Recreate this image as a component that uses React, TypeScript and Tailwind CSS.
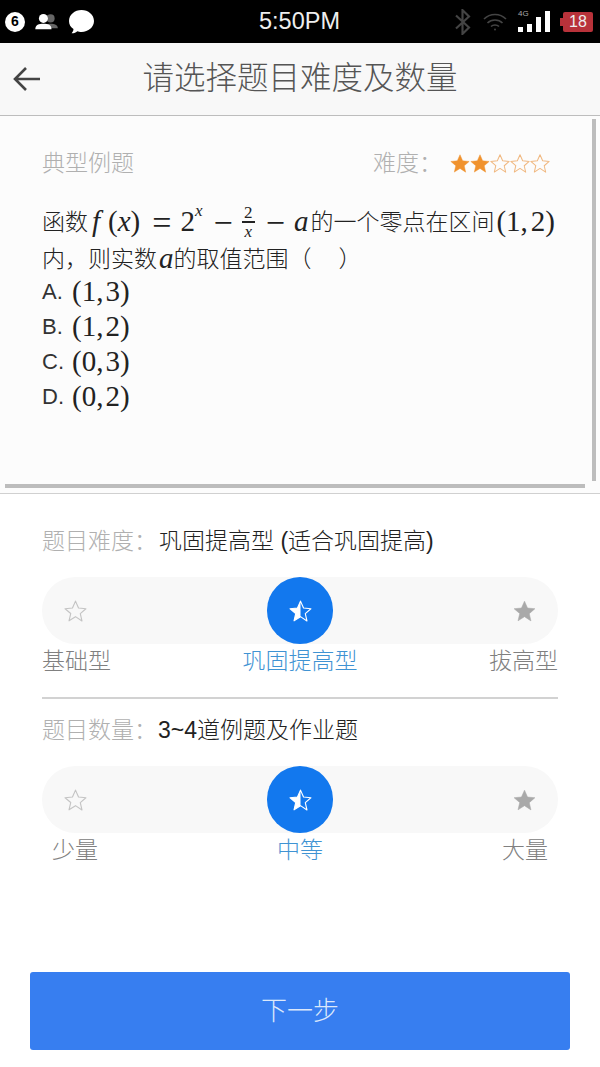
import React from "react";

const FONT = "font-['Liberation_Sans','Noto_Sans_CJK_SC',sans-serif]";
const MATH = "font-['Liberation_Serif',serif]";
const STAR = "M12 2l2.9 6.6 7.1.7-5.4 4.7 1.6 7L12 16.9 5.8 20.9l1.6-7L2 9.3l7.1-.7z";

const Star = ({ kind, className }: { kind: "full" | "empty" | "half"; className: string }) => (
  <svg viewBox="0 -1 24 24" className={className}>
    {kind === "half" && <path d="M12 2v14.9L5.8 20.9l1.6-7L2 9.3l7.1-.7z" fill="currentColor" />}
    <path
      d={STAR}
      fill={kind === "full" ? "currentColor" : "none"}
      stroke="currentColor"
      strokeWidth={kind === "full" ? 0.5 : 1.1}
      strokeLinejoin="round"
    />
  </svg>
);

const Slider = ({ labels, active, inset }: { labels: string[]; active: string; inset?: boolean }) => (
  <div>
    <div className="flex h-[67px] items-center justify-between rounded-full bg-[#f8f8f8] px-[21px]">
      <Star kind="empty" className="h-[25px] w-[25px] text-[#c4c4c4]" />
      <div className="flex h-[67px] w-[66px] items-center justify-center rounded-full bg-[#1278ee]">
        <Star kind="half" className="h-[25px] w-[25px] text-white" />
      </div>
      <Star kind="full" className="h-[25px] w-[25px] text-[#a9a9a9]" />
    </div>
    <div
      className={`flex h-[34px] items-center justify-between text-[23px] leading-[34px] font-light text-[#808080] ${
        inset ? "px-[10px]" : ""
      }`}
    >
      {labels.map((t) => (
        <span key={t} className={t === active ? "text-[#3f93d3]" : ""}>
          {t}
        </span>
      ))}
    </div>
  </div>
);

const Option = ({ letter, a, b }: { letter: string; a: string; b: string }) => (
  <div className="flex h-[35px] items-center">
    <span className="w-[30px] text-[22px] font-light text-[#333]">{letter}.</span>
    <span className={`${MATH} text-[29px] text-[#222]`}>
      ({a},<span className="ml-[2px]">{b}</span>)
    </span>
  </div>
);

export default function App() {
  return (
    <div className={`${FONT} relative flex h-[1067px] w-[600px] flex-col overflow-hidden bg-white`}>
      {/* status bar */}
      <div className="flex h-[43px] items-center justify-between bg-black pr-[7px] pl-[5px]">
        <div className="flex items-center gap-[10px]">
          <div className="flex h-[20px] w-[20px] items-center justify-center rounded-full bg-white text-[14px] font-bold text-black">
            6
          </div>
          <svg viewBox="0 0 26 20" className="h-[18px] w-[24px]">
            <circle cx="17" cy="6" r="4.500" fill="#666" />
            <path d="M10 17c0-4 3-5 7-5s8 1 8 5z" fill="#666" />
            <circle cx="9" cy="6" r="5" fill="#fff" />
            <path d="M0 18c0-5 4-6 9-6s9 1 9 6z" fill="#fff" />
          </svg>
          <svg viewBox="0 0 24 24" className="h-[25px] w-[25px]">
            <path d="M12 1c6.500 0 12 4.500 12 10.500S18.500 22 12 22c-1.500 0-3-.2-4-.7-1 1-3 2-5.500 2 1-1 1.800-2.500 1.800-4C1.600 17.500 0 14.800 0 11.500 0 5.500 5.500 1 12 1z" fill="#fff" />
          </svg>
        </div>
        <span className="absolute left-[259px] text-[23.500px] text-[#eee]">5:50PM</span>
        <div className="flex items-center">
          <svg viewBox="0 0 14 24" className="h-[26px] w-[17px]" fill="none" stroke="#444" strokeWidth="2">
            <path d="M1 6l12 11-6 6V1l6 6L1 18" />
          </svg>
          <svg viewBox="0 0 24 18" className="ml-[12px] h-[20px] w-[24px]" fill="none" stroke="#444" strokeWidth="1.600">
            <path d="M1 6c6-6 16-6 22 0M4.500 10c4-4 11-4 15 0M8 13.500c2-2 6-2 8 0" />
            <circle cx="12" cy="16.500" r="1" fill="#444" stroke="none" />
          </svg>
          <div className="relative ml-[11px] flex h-[21px] items-end gap-[4px]">
            <span className="absolute top-[-2px] left-0 text-[8px] leading-[10px] text-[#aaa]">4G</span>
            <div className="h-[5px] w-[5px] bg-white" />
            <div className="h-[8px] w-[5px] bg-white" />
            <div className="h-[15px] w-[5px] bg-white" />
            <div className="h-[21px] w-[5px] bg-white" />
          </div>
          <div className="ml-[10px] h-[8px] w-[3px] bg-[#b8323a]" />
          <div className="flex h-[20px] w-[30px] items-center justify-center rounded-[2px] bg-[#b8323a] text-[16px] text-[#eee]">
            18
          </div>
        </div>
      </div>

      {/* title bar */}
      <div className="relative flex h-[73px] items-center justify-center border-b border-[#bdbdbd] bg-[#f8f8f8]">
        <svg viewBox="0 0 28 28" className="absolute left-[13px] h-[28px] w-[28px]" fill="none" stroke="#444" strokeWidth="2.600">
          <path d="M27 14H2M13 3L2 14l11 11" />
        </svg>
        <span className="text-[31.500px] font-light text-[#555]">请选择题目难度及数量</span>
      </div>

      {/* example question */}
      <div className="relative h-[378px] border-b border-[#d0d0d0] bg-[#fcfcfc] px-[42px] pt-[30px]">
        <div className="flex h-[34px] items-center justify-between pr-[7px] text-[23px] font-light text-[#b0b0b0]">
          <span>典型例题</span>
          <div className="flex items-center">
            <span>难度：</span>
            <div className="ml-[7px] flex">
              <Star kind="full" className="h-[22px] w-[22px] text-[#f0922e]" />
              <Star kind="full" className="-ml-[2px] h-[22px] w-[22px] text-[#f0922e]" />
              <Star kind="empty" className="-ml-[2px] h-[22px] w-[22px] text-[#f0b880]" />
              <Star kind="empty" className="-ml-[2px] h-[22px] w-[22px] text-[#f0b880]" />
              <Star kind="empty" className="-ml-[2px] h-[22px] w-[22px] text-[#f0b880]" />
            </div>
          </div>
        </div>

        <div className="mt-[21px] flex h-[42px] items-center whitespace-nowrap text-[23px] font-light text-[#222]">
          函数
          <span className={`${MATH} ml-[4px] text-[29px] italic`}>f</span>
          <span className={`${MATH} ml-[8px] text-[29px]`}>
            (<i>x</i>)
          </span>
          <span className={`${MATH} ml-[12px] text-[34px]`}>=</span>
          <span className={`${MATH} ml-[9px] text-[29px]`}>2</span>
          <sup className={`${MATH} -mt-[6px] text-[17px] italic`}>x</sup>
          <span className={`${MATH} ml-[11px] text-[34px]`}>−</span>
          <span className={`${MATH} ml-[9px] inline-flex flex-col items-center text-[17px] leading-[15px]`}>
            <span>2</span>
            <span className="my-[1px] h-[2px] w-[13px] bg-[#222]" />
            <i>x</i>
          </span>
          <span className={`${MATH} ml-[11px] text-[34px]`}>−</span>
          <span className={`${MATH} ml-[9px] mr-[2px] text-[29px] italic`}>a</span>
          的一个零点在区间
          <span className={`${MATH} ml-[2px] text-[29px]`}>
            (1,<span className="ml-[3px]">2</span>)
          </span>
        </div>
        <div className="mt-[-2px] flex h-[36px] items-center whitespace-nowrap text-[23px] font-light text-[#222]">
          内，则实数<span className={`${MATH} ml-[2px] text-[29px] italic`}>a</span>的取值范围（<span className="ml-[27px]">）</span>
        </div>
        <div className="mt-[-3px]">
          <Option letter="A" a="1" b="3" />
          <Option letter="B" a="1" b="2" />
          <Option letter="C" a="0" b="3" />
          <Option letter="D" a="0" b="2" />
        </div>

        {/* scrollbars */}
        <div className="absolute top-[3px] right-[4px] h-[362px] w-[4px] bg-[#bdbdbd]" />
        <div className="absolute bottom-[5px] left-[5px] h-[4px] w-[580px] bg-[#bdbdbd]" />
      </div>

      {/* options */}
      <div className="flex flex-1 flex-col px-[42px] pt-[29px]">
        <div className="flex h-[36px] items-center text-[23px] font-light">
          <span className="text-[#b0b0b0]">题目难度：</span>
          <span className="ml-[2px] text-[#222]">巩固提高型 (适合巩固提高)</span>
        </div>
        <div className="mt-[18px]">
          <Slider labels={["基础型", "巩固提高型", "拔高型"]} active="巩固提高型" />
        </div>
        <div className="mt-[19px] h-[2px] bg-[#d2d2d2]" />
        <div className="mt-[13px] flex h-[36px] items-center text-[23px] font-light">
          <span className="text-[#b0b0b0]">题目数量：</span>
          <span className="ml-[1px] text-[#222]">3~4道例题及作业题</span>
        </div>
        <div className="mt-[18px]">
          <Slider labels={["少量", "中等", "大量"]} active="中等" inset />
        </div>
      </div>

      {/* next button */}
      <div className="px-[30px] pb-[17px]">
        <button className="flex h-[78px] w-full items-center justify-center rounded-[3px] bg-[#377ef0] text-[26px] font-light text-[#dce8fb]">
          下一步
        </button>
      </div>
    </div>
  );
}
